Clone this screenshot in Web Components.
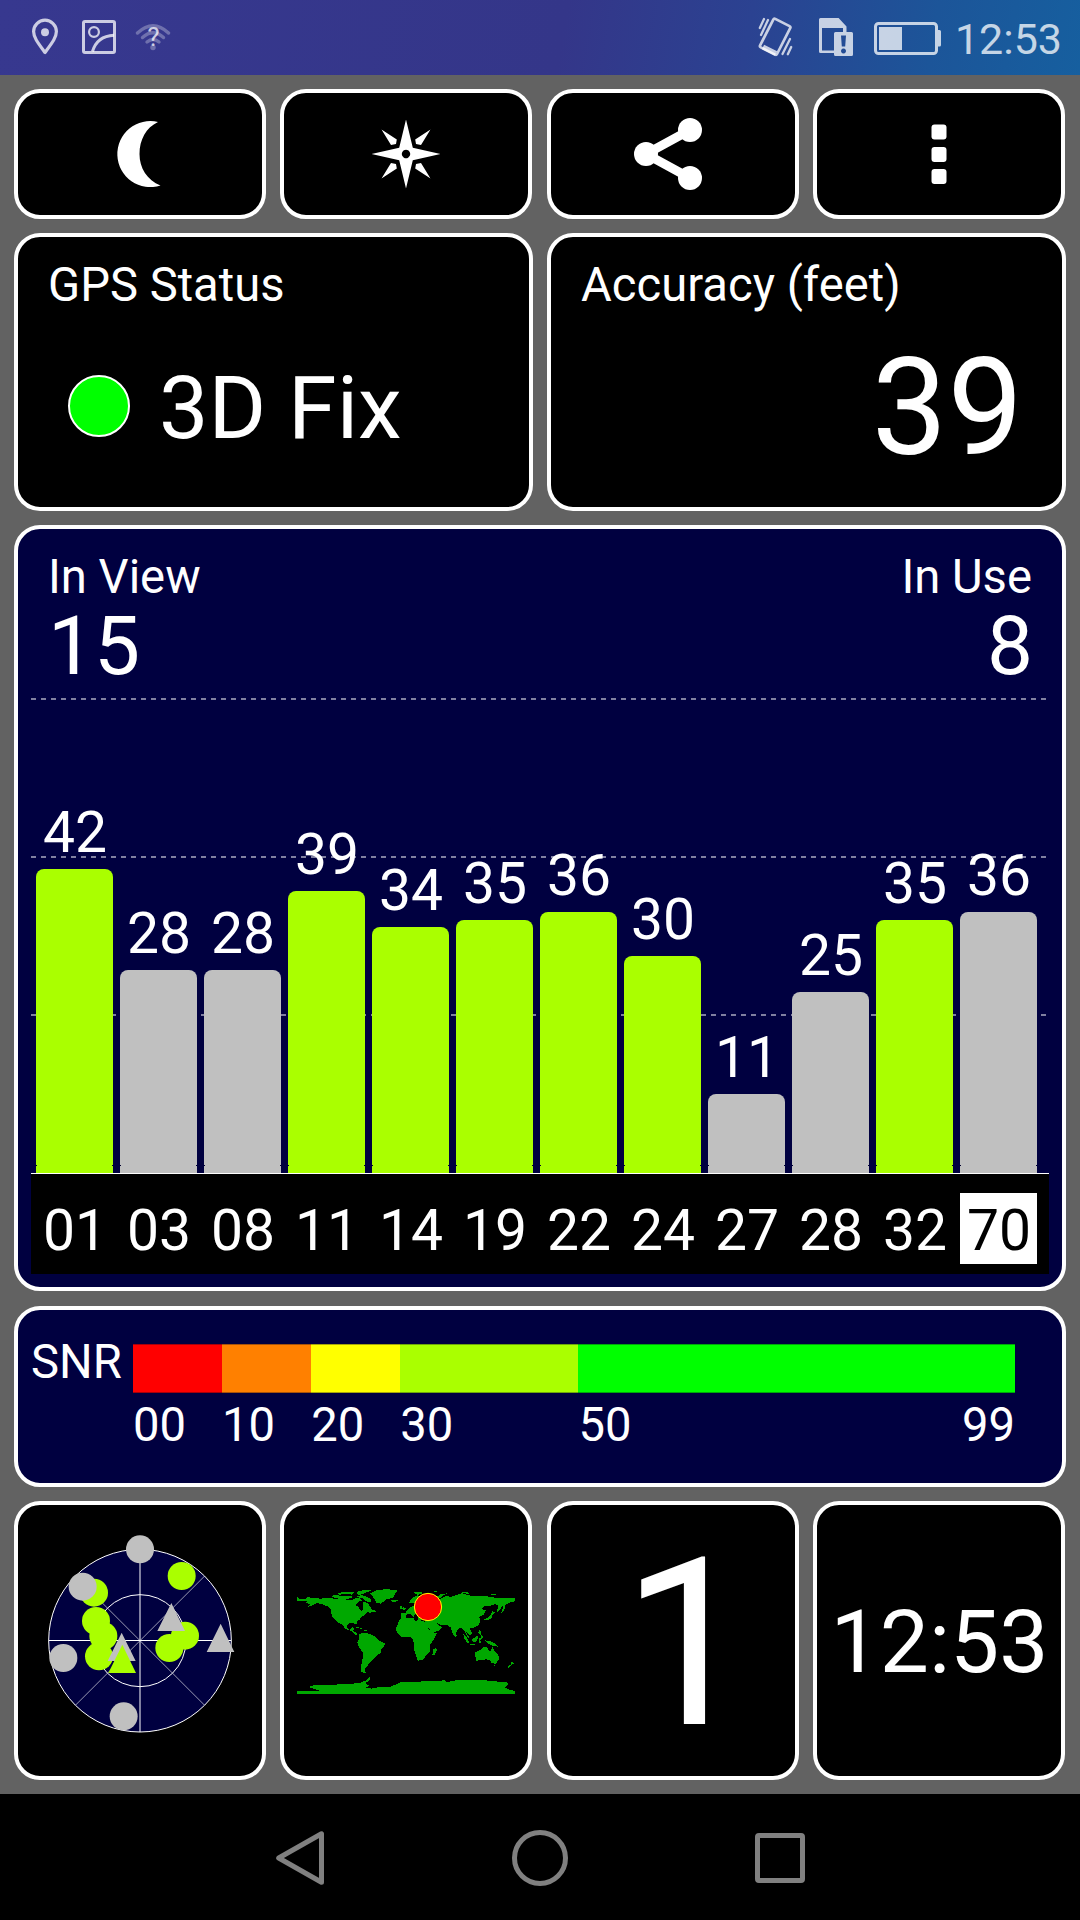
<!DOCTYPE html>
<html lang="en">
<head>
<meta charset="utf-8">
<title>GPS Status</title>
<style>
    html, body {
        margin: 0;
        background: #000;
    }

    body {
        width: 1080px;
        height: 1920px;
        overflow: hidden;
        color: #fff;
        font-family: Roboto, "Liberation Sans", sans-serif;
    }
</style>
</head>
<body>
<gps-app></gps-app>

<script>
'use strict'

function defineElement(name, html, setup) {
    const template = document.createElement('template')
    template.innerHTML = html

    customElements.define(name, class extends HTMLElement {
        constructor() {
            super()
            this.attachShadow({ mode: 'open' })
            this.shadowRoot.appendChild(template.content.cloneNode(true))
        }

        connectedCallback() {
            if (setup)
                setup(this, this.shadowRoot)
        }
    })
}

// ---- system bars ----

defineElement('system-status', `
    <style>
        :host {
            display: flex;
            align-items: flex-start;
            box-sizing: border-box;
            height: 75px;
            padding-right: 18px;
            color: rgba(255, 255, 255, .75);
            background: linear-gradient(100deg, #37388f 0%, #343689 52%, #2b4291 69%, #1c5599 86%, #165f9f 100%);
        }
        svg { display: block; fill: none; stroke: currentColor; }
        .spacer { flex: 1; }
        .time { margin-left: 4px; font-size: 43px; line-height: 78px; }
    </style>
    <svg width="180" height="75">
        <path stroke-width="3.2" stroke-linejoin="round" d="M45 52.5C38 43 33.6 37.5 33.6 31.6a11.4 11.4 0 0 1 22.8 0C56.4 37.5 52 43 45 52.5Z"/>
        <circle cx="45" cy="32.3" r="4" fill="currentColor" stroke="none"/>
        <rect x="83.5" y="21.5" width="31" height="31" rx="1.5" stroke-width="3"/>
        <circle cx="94" cy="32" r="4.9" stroke-width="2.2"/>
        <path stroke-width="3" d="M92.5 51.5Q97 36 114 35.2"/>
        <g opacity=".38" stroke-width="3.4" stroke-linecap="round">
            <path d="M137.5 33Q153 18.5 168.5 33"/>
            <path d="M142.5 37.5Q153 28 163.5 37.5"/>
            <path d="M147 42Q153 37 159 42"/>
            <circle cx="153" cy="47.5" r="2.7" fill="currentColor" stroke="none"/>
        </g>
        <text x="153.3" y="45.5" font-size="26" text-anchor="middle" fill="currentColor" stroke="none">?</text>
    </svg>
    <span class="spacer"></span>
    <svg width="196" height="75" viewBox="756 0 196 75">
        <rect x="-10" y="-16" width="19" height="32" rx="1.5" transform="translate(776.6 37) rotate(27)" stroke-width="2.7"/>
        <path stroke-width="5" d="M764 47L777 53.5"/>
        <path stroke-width="2.3" stroke-linecap="round" d="M769 20L762 35M765 19L760.8 28M791 39L783.5 54M792.2 47L788.8 54.2"/>
        <path fill="currentColor" stroke="none" fill-rule="evenodd" d="M821.5 18h18.1l7.9 8.5V32H844v-4h-21v22.5h12V53h-13.5a1.5 1.5 0 0 1-1.5-1.5v-32a1.5 1.5 0 0 1 1.5-1.5Z"/>
        <path fill="currentColor" stroke="none" fill-rule="evenodd" d="M836.5 32h16a1.500 1.500 0 0 1 1.500 1.500v21a1.500 1.500 0 0 1-1.500 1.500h-16a1.500 1.500 0 0 1-1.500-1.500v-21a1.500 1.500 0 0 1 1.500-1.500ZM842 35.5l.8 11h3.4l.8-11ZM844.5 48.5a2.5 2.5 0 1 0 .01 0Z"/>
        <rect x="876.5" y="23.5" width="61" height="30" rx="3" stroke-width="3"/>
        <path fill="currentColor" stroke="none" d="M880 27h23v23h-23ZM939 30h1.5a1.5 1.5 0 0 1 1.5 1.5v13.5a1.5 1.5 0 0 1-1.5 1.5h-1.5Z"/>
    </svg>
    <span class="time">12:53</span>
`)

defineElement('system-nav', `
    <style>
        :host {
            display: flex;
            align-items: center;
            justify-content: center;
            gap: 180px;
            height: 126px;
            padding-top: 2px;
            box-sizing: border-box;
            background: #000;
        }
        svg { display: block; width: 60px; height: 60px; fill: none; stroke: #808080; stroke-width: 5; }
    </style>
    <svg><path stroke-linejoin="round" d="M51.5 5.8V54.200L8.700 30Z"/></svg>
    <svg><circle cx="30" cy="30" r="25.500"/></svg>
    <svg><rect x="7.500" y="7.500" width="45" height="45" rx="1.500"/></svg>
`)

// ---- generic parts ----

defineElement('gps-tile', `
    <style>
        :host {
            display: flex;
            flex-direction: column;
            box-sizing: border-box;
            border: 4px solid #fff;
            border-radius: 26px;
            background: var(--tile-background, #000);
            overflow: hidden;
        }
        :host([center]) { align-items: center; justify-content: center; }
    </style>
    <slot></slot>
`)

defineElement('value-panel', `
    <style>
        :host { display: block; }
        .caption { padding: 20px 30px 0; font-size: 47.2px; line-height: 56px; }
        .value {
            display: flex;
            align-items: center;
            height: 100px;
            margin-top: 43px;
            padding-left: 50px;
            gap: 29px;
            font-size: 88px;
            line-height: 100px;
        }
        :host([large]) .value { justify-content: flex-end; padding: 0 39px 0 0; font-size: 134.5px; }
        .value ::slotted(span) { margin-top: 4px; }
    </style>
    <div class="caption"><slot name="caption"></slot></div>
    <div class="value"><slot></slot></div>
`)

defineElement('fix-light', `
    <style>
        :host {
            width: 62px;
            height: 62px;
            box-sizing: border-box;
            border: 2px solid #fff;
            border-radius: 50%;
            background: #0f0;
        }
    </style>
`)

const ToolIcons = {
    night: '<path transform="translate(-14 -89)" d="M158 122A33 33 0 1 0 160.500 185.500C147 180 139.500 168 139.500 154S146 127.500 158 122Z"/>',
    compass: `<g transform="translate(126 65)">
        <path fill-rule="evenodd" d="M0-34.5L6.8-6.3L34.5 0L6.8 6.3L0 34.5L-6.8 6.3L-34.5 0L-6.8-6.3ZM0-4.2a4.2 4.2 0 1 0 .01 0Z"/>
        <path d="M-24.5-24.5L-9.2-14.5L-10-10L-15-9ZM24.5-24.5L9.2-14.5L10-10L15-9ZM-24.5 24.5L-9.2 14.5L-10 10L-15 9ZM24.5 24.5L9.2 14.5L10 10L15 9Z"/></g>`,
    share: `<path fill="none" stroke="#fff" stroke-width="9" d="M143 41L99 65L143 89"/>
        <circle cx="99" cy="65" r="12"/><circle cx="143" cy="41" r="12"/><circle cx="143" cy="89" r="12"/>`,
    menu: `<rect x="118.5" y="35.5" width="15" height="15" rx="3"/>
        <rect x="118.5" y="58" width="15" height="15" rx="3"/>
        <rect x="118.5" y="80" width="15" height="15" rx="3"/>`
}

defineElement('tool-icon', `
    <style>
        :host { display: block; width: 252px; height: 130px; flex: none; }
        svg { display: block; fill: #fff; }
    </style>
    <svg width="252" height="130"></svg>
`, (host, root) => {
    root.querySelector('svg').innerHTML = ToolIcons[host.getAttribute('name')]
})

// ---- satellite bars ----

const Satellites = [
    { prn: '01', snr: 42, used: true },
    { prn: '03', snr: 28 },
    { prn: '08', snr: 28 },
    { prn: '11', snr: 39, used: true },
    { prn: '14', snr: 34, used: true },
    { prn: '19', snr: 35, used: true },
    { prn: '22', snr: 36, used: true },
    { prn: '24', snr: 30, used: true },
    { prn: '27', snr: 11 },
    { prn: '28', snr: 25 },
    { prn: '32', snr: 35, used: true },
    { prn: '70', snr: 36, glonass: true }
]

const PixelPerDb = 7.25

defineElement('satellite-chart', `
    <style>
        :host { display: block; }
        .head { display: flex; justify-content: space-between; padding: 20px 30px 0; }
        .in-use { text-align: right; }
        .in-use .count { margin-right: -1px; }
        .caption { font-size: 47.2px; line-height: 56px; }
        .count { font-size: 82px; line-height: 66px; margin-top: 8px; }
        .plot, .axis { display: flex; gap: 7px; margin: 0 13px; padding-left: 5px; font-size: 57px; text-align: center; }
        .plot {
            --dash: repeating-linear-gradient(90deg, #8080a0 0 5px, transparent 5px 10px);
            align-items: flex-end;
            height: 475px;
            margin-top: 19px;
            background: var(--dash) 0 0 / 100% 2px no-repeat, var(--dash) 0 158px / 100% 2px no-repeat, var(--dash) 0 316px / 100% 2px no-repeat;
        }
        .column, .prn { width: 77px; }
        .column span { display: block; padding-left: 1px; line-height: 60px; margin-bottom: 6px; }
        .bar {
            border-radius: 8px 8px 0 0;
            background: linear-gradient(#000030, #000030) 0 calc(100% - 7px) / 1px 1px no-repeat,
                linear-gradient(#000030, #000030) 100% calc(100% - 7px) / 1px 1px no-repeat, silver;
        }
        .used .bar { background-color: #af0; }
        .axis { height: 100px; border-top: 1px solid #fff; background: #000; }
        .prn { box-sizing: border-box; height: 71px; margin-top: 19px; padding: 4px 0 0 1px; line-height: 67px; }
        .glonass { color: #000; background: #fff; }
    </style>
    <div class="head">
        <div class="in-view"><div class="caption">In View</div><div class="count">15</div></div>
        <div class="in-use"><div class="caption">In Use</div><div class="count">8</div></div>
    </div>
    <div class="plot"></div>
    <div class="axis"></div>
`, (host, root) => {
    root.querySelector('.plot').innerHTML = Satellites.map(s => `
        <div class="column ${s.used ? 'used' : ''}">
            <span>${s.snr}</span>
            <div class="bar" style="height: ${Math.floor(s.snr * PixelPerDb)}px"></div>
        </div>`).join('')
    root.querySelector('.axis').innerHTML = Satellites.map(s =>
        `<div class="prn ${s.glonass ? 'glonass' : ''}">${s.prn}</div>`).join('')
})

defineElement('snr-legend', `
    <style>
        :host { display: flex; padding-left: 13px; font-size: 47.2px; line-height: 56px; }
        .name { width: 102px; padding-top: 24px; }
        .scale { display: flex; width: 882px; padding-top: 34px; }
        .part { flex: var(--span) 0 0; min-width: 0; }
        .color { height: 49px; box-sizing: border-box; border: solid rgba(0, 0, 32, .35); border-width: 1px 0; background: var(--color); }
        .label { display: flex; justify-content: space-between; margin-top: 4px; }
    </style>
    <div class="name">SNR</div>
    <div class="scale">
        <div class="part" style="--span: 10; --color: #f00"><div class="color"></div><div class="label">00</div></div>
        <div class="part" style="--span: 10; --color: #ff8000"><div class="color"></div><div class="label">10</div></div>
        <div class="part" style="--span: 10; --color: #ff0"><div class="color"></div><div class="label">20</div></div>
        <div class="part" style="--span: 20; --color: #af0"><div class="color"></div><div class="label">30</div></div>
        <div class="part" style="--span: 49; --color: #0f0"><div class="color"></div><div class="label"><span>50</span><span>99</span></div></div>
    </div>
`)

// ---- bottom row ----

defineElement('sky-view', `
    <style>
        :host, svg { display: block; }
        .used { fill: #af0; }
        .seen { fill: silver; }
    </style>
    <svg width="244" height="271" viewBox="54 45 732 813">
        <circle cx="420" cy="452" r="274" fill="#000040" stroke="#fff" stroke-width="3"/>
        <circle cx="420" cy="452" r="138" fill="none" stroke="#fff" stroke-width="3"/>
        <path stroke="#fff" stroke-width="3" stroke-opacity=".6" d="M226 646L614 258M306 338L614 646"/>
        <path stroke="#fff" stroke-width="6" stroke-opacity=".5" d="M420 178V726"/>
        <path stroke="#fff" stroke-width="3" d="M146 451.5H694"/>
        <g class="used">
            <circle cx="282" cy="308" r="42"/>
            <circle cx="545" cy="258" r="42"/>
            <circle cx="288" cy="393" r="42"/>
            <circle cx="310" cy="438" r="42"/>
            <circle cx="297" cy="499" r="42"/>
            <circle cx="555" cy="437" r="42"/>
            <circle cx="508" cy="474" r="42"/>
        </g>
        <g class="seen">
            <circle cx="420" cy="178" r="42"/>
            <circle cx="248" cy="290" r="42"/>
            <circle cx="190" cy="504" r="42"/>
            <circle cx="371" cy="679" r="42"/>
            <path d="M514 339L555 423H472ZM662 401L703 486H620ZM365 428L407 513H323Z"/>
        </g>
        <path class="used" d="M367 464L408 549H325Z"/>
    </svg>
`)

defineElement('world-map', `
    <style>
        :host, svg { display: block; }
        .land { fill: #00a800; shape-rendering: crispEdges; }
    </style>
    <svg width="220" height="141" viewBox="48 0 660 423">
        <g class="land">
            <path d="M51 79L57 86L75 88L80 82L100 83L120 86L150 84L170 87L195 88L215 91L228 84L238 83L246 92L234 96L228 106L236 112L244 124L250 119L248 107L251 95L264 99L270 110L282 125L270 128L262 126L256 134L246 139L238 150L231 154L229 163L217 158L203 162L201 174L209 179L217 172L223 175L219 184L229 187L231 194L242 193L240 197L226 194L214 183L196 176L187 164L174 158L158 142L153 128L152 119L142 109L126 102L110 99L98 105L82 112L92 103L78 99L82 94L66 94L51 92Z"/>
            <path d="M270 71L288 61L320 57L354 62L345 72L340 82L318 89L303 101L290 99L284 89L276 77ZM334 91L350 89L354 93L344 96L335 95Z"/>
            <path d="M174 69L200 65L224 66L216 74L198 72L178 74ZM152 78L168 75L184 78L208 77L220 81L202 87L166 85ZM230 66L252 60L276 60L256 69L234 76ZM230 77L248 76L268 84L276 94L264 98L250 86L234 82ZM282 119L290 125L276 126Z"/>
            <path d="M242 190L254 189L268 191L284 199L294 210L315 220L313 228L304 238L302 250L289 257L278 270L267 280L262 290L254 298L257 309L244 306L242 292L247 274L249 248L238 234L232 218L236 208L237 196ZM224 170L240 173L248 177L232 174ZM250 179L268 183L256 184Z"/>
            <path d="M363 144L384 143L400 143L404 152L420 151L438 156L446 178L456 188L472 189L459 212L450 225L449 246L436 259L429 270L413 272L409 261L402 239L402 222L397 204L386 200L365 201L355 192L348 182L350 169L357 154ZM469 233L470 243L463 257L457 255L460 238Z"/>
            <path d="M363 143L362 130L376 129L382 119L390 112L402 106L404 100L387 98L396 84L412 76L430 80L450 83L460 84L480 88L495 79L516 80L546 70L567 76L590 79L620 79L650 84L680 85L705 84V94L692 97L680 102L665 110L661 119L651 126L655 105L645 103L632 107L614 108L604 117L618 121L610 135L598 141L601 154L596 166L580 173L570 175L576 190L571 197L558 186L569 205L563 203L552 181L543 173L533 178L528 190L526 200L518 191L512 172L502 166L484 165L470 159L480 168L486 172L478 181L456 190L449 179L440 162L434 151L420 150L413 148L414 138L426 136L424 128L408 129L401 140L391 131L380 134L377 143ZM370 101L373 114L381 117L370 120L366 115L373 110ZM359 109L366 108L365 116L360 117Z"/>
            <path d="M470 81L482 73L501 70L490 76L480 84ZM400 67L421 66L430 69L414 75ZM544 65L563 67L570 72L548 69ZM630 71L650 74L634 75ZM458 62L480 64L464 65Z"/>
            <path d="M672 104L676 110L671 123L664 129L668 116ZM637 124L645 128L638 133L634 144L625 151L611 148L624 143L632 136ZM597 178L604 184L603 192L610 202L603 205L602 195L595 189ZM550 191L559 201L569 217L563 220L553 206ZM577 207L588 200L594 196L592 210L586 217L578 215ZM568 221L584 223L589 226L572 225ZM598 204L608 205L601 212L604 220L596 219ZM614 211L628 213L644 219L653 230L638 227L626 221ZM525 193L530 196L527 202Z"/>
            <path d="M585 247L601 240L609 232L622 232L625 241L633 243L637 229L643 244L655 253L657 267L648 281L636 280L630 272L618 268L602 271L588 272ZM640 284L647 284L643 289ZM696 273L703 281L696 284L685 294L681 291L692 284Z"/>
            <path d="M51 363H120L84 351L102 345L150 345L210 341L238 340L258 331L269 322L270 329L256 340L268 348L255 352L274 356L305 350L330 351L350 342L365 336L394 337L430 334L465 333L495 331L502 337L520 332L555 329L600 330L640 333L665 336L686 338L682 347L674 352L690 360L705 363V372H51Z"/>
        </g>
        <circle cx="444" cy="111" r="41" fill="red" stroke="#ff0" stroke-width="3"/>
    </svg>
`)

// ---- page ----

defineElement('gps-app', `
    <style>
        :host { display: block; width: 1080px; }
        main {
            display: flex;
            flex-direction: column;
            box-sizing: border-box;
            height: 1719px;
            padding: 14px 14px 0;
            background: #626262;
        }
        .row { display: grid; column-gap: 14px; margin-bottom: 14px; }
        .four { grid-template-columns: 252px 253px 252px 252px; }
        .four > :nth-child(2) { width: 252px; }
        .two { grid-template-columns: 519px 519px; height: 278px; }
        .tools { height: 130px; }
        .bottom { height: 279px; }
        .navy { --tile-background: #000040; }
        .chart { height: 766px; margin-bottom: 15px; }
        .legend { height: 181px; margin-bottom: 14px; }
        .big { padding: 8px 0 0 29px; font-size: 234px; line-height: 263px; }
        .clock { padding: 3px 0 0 1px; font-size: 87.5px; line-height: 100px; }
    </style>
    <system-status></system-status>
    <main>
        <div class="row four tools">
            <gps-tile center><tool-icon name="night"></tool-icon></gps-tile>
            <gps-tile center><tool-icon name="compass"></tool-icon></gps-tile>
            <gps-tile center><tool-icon name="share"></tool-icon></gps-tile>
            <gps-tile center><tool-icon name="menu"></tool-icon></gps-tile>
        </div>
        <div class="row two">
            <gps-tile>
                <value-panel><span slot="caption">GPS Status</span><fix-light></fix-light><span>3D Fix</span></value-panel>
            </gps-tile>
            <gps-tile>
                <value-panel large><span slot="caption">Accuracy (feet)</span><span>39</span></value-panel>
            </gps-tile>
        </div>
        <gps-tile class="navy chart"><satellite-chart></satellite-chart></gps-tile>
        <gps-tile class="navy legend"><snr-legend></snr-legend></gps-tile>
        <div class="row four bottom">
            <gps-tile center><sky-view></sky-view></gps-tile>
            <gps-tile center><world-map></world-map></gps-tile>
            <gps-tile center><span class="big">1</span></gps-tile>
            <gps-tile center><span class="clock">12:53</span></gps-tile>
        </div>
    </main>
    <system-nav></system-nav>
`)
</script>
</body>
</html>
